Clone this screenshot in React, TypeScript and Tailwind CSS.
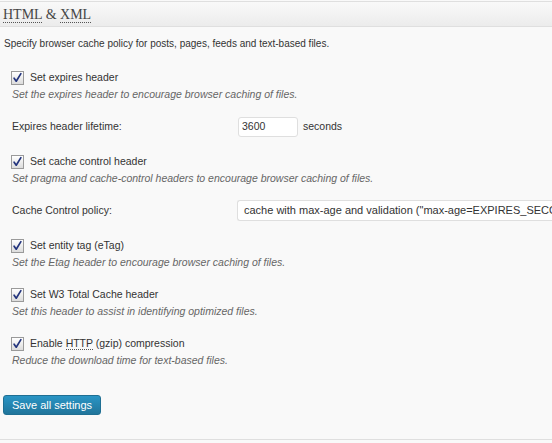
function Check({ label, children }: { label: React.ReactNode; children: React.ReactNode }) {
  return (
    <div className="pl-[11px]">
      <div className="flex items-center h-[17px]">
        <span className="relative w-[13px] h-[14px] border border-[#9a9a9a] bg-gradient-to-b from-[#ffffff] to-[#dcdcdc] shrink-0">
          <svg viewBox="0 0 13 14" className="absolute inset-0 w-full h-full">
            <path d="M2.5 7.2 L5 10.8 L10.5 1.8" fill="none" stroke="#23347d" strokeWidth="2" strokeLinejoin="round" strokeLinecap="round" />
          </svg>
        </span>
        <span className="ml-[6px] text-[10.5px] text-[#333]">{label}</span>
      </div>
      <p className="pl-[1px] h-[17px] leading-[17px] text-[10.5px] italic text-[#666]">{children}</p>
    </div>
  );
}

export default function App() {
  return (
    <div className="w-[552px] h-[443px] overflow-hidden bg-[#f9f9f9] font-['Liberation_Sans',Arial,sans-serif]">
      <div className="mt-[1px] h-[26px] border-t border-b border-[#dfdfdf] bg-gradient-to-b from-[#f9f9f9] to-[#ececec] flex items-center pl-[3px]">
        <h3 className="font-['Liberation_Serif',Georgia,serif] text-[14px] text-[#464646]">
          <abbr className="no-underline border-b border-dotted border-[#555]">HTML</abbr> &amp;{' '}
          <abbr className="no-underline border-b border-dotted border-[#555]">XML</abbr>
        </h3>
      </div>

      <p className="mt-[8px] pl-[4px] h-[17px] leading-[17px] text-[10px] text-[#333]">
        Specify browser cache policy for posts, pages, feeds and text-based files.
      </p>

      <div className="mt-[17px]">
        <Check label="Set expires header">Set the expires header to encourage browser caching of files.</Check>
      </div>

      <div className="mt-[14px] flex items-center h-[20px] text-[10.5px] text-[#333]">
        <span className="pl-[12px] w-[238px]">Expires header lifetime:</span>
        <span className="w-[60px] h-[20px] bg-white border border-[#dfdfdf] rounded-[3px] pl-[3px] flex items-center">3600</span>
        <span className="ml-[5px]">seconds</span>
      </div>

      <div className="mt-[16px]">
        <Check label="Set cache control header">Set pragma and cache-control headers to encourage browser caching of files.</Check>
      </div>

      <div className="mt-[13px] flex items-center h-[21px] text-[10.5px] text-[#333]">
        <span className="pl-[12px] w-[237px] shrink-0">Cache Control policy:</span>
        <span className="h-[21px] grow min-w-0 bg-white border border-[#dfdfdf] border-r-0 rounded-l-[3px] pl-[6px] flex items-center whitespace-nowrap overflow-hidden text-[11px]">
          cache with max-age and validation ("max-age=EXPIRES_SECONDS, public, must-revalidate")
        </span>
      </div>

      <div className="mt-[16px]">
        <Check label="Set entity tag (eTag)">Set the Etag header to encourage browser caching of files.</Check>
      </div>

      <div className="mt-[15px]">
        <Check label="Set W3 Total Cache header">Set this header to assist in identifying optimized files.</Check>
      </div>

      <div className="mt-[15px]">
        <Check
          label={
            <>
              Enable <abbr className="no-underline border-b border-dotted border-[#555]">HTTP</abbr> (gzip) compression
            </>
          }
        >
          Reduce the download time for text-based files.
        </Check>
      </div>

      <div className="mt-[26px] pl-[3px] flex">
        <button className="h-[20px] px-[8px] rounded-[3px] border border-[#1f6f93] bg-gradient-to-b from-[#2a95c5] to-[#21759b] text-white text-[11px] leading-none">
          Save all settings
        </button>
      </div>

      <div className="mt-[24px] border-t border-[#dfdfdf]" />
    </div>
  );
}
